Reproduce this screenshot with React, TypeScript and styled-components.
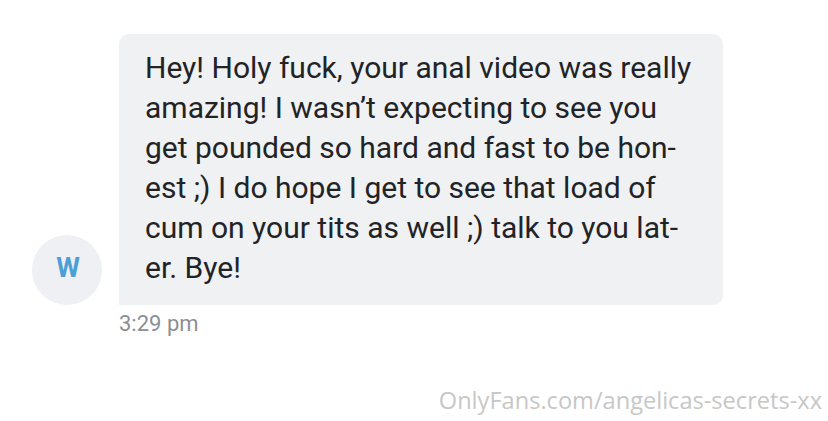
import React from "react";
import styled, { createGlobalStyle } from "styled-components";

const GlobalStyle = createGlobalStyle`
  html, body {
    margin: 0;
    padding: 0;
    background: #ffffff;
  }
  * {
    box-sizing: border-box;
  }
`;

const Page = styled.div`
  width: 828px;
  height: 421px;
  display: flex;
  flex-direction: column;
  padding: 34px 6px 0 32px;
  overflow: hidden;
`;

const MessageRow = styled.div`
  display: flex;
  align-items: flex-end;
  gap: 17px;
`;

const Avatar = styled.div`
  width: 70px;
  height: 70px;
  border-radius: 50%;
  background: #eef0f3;
  display: flex;
  align-items: center;
  justify-content: center;
  flex-shrink: 0;
  padding: 0 0 4px 2px;
  color: #4b9fd6;
  font-family: Roboto, "Liberation Sans", sans-serif;
  font-weight: 700;
  font-size: 27px;
`;

const Bubble = styled.div`
  width: 604px;
  background: #f0f1f3;
  border-radius: 10px 10px 10px 0;
  padding: 14px 20px 17px 26px;
  font-family: Roboto, "Liberation Sans", sans-serif;
  font-size: 30px;
  line-height: 40px;
  color: #222326;
`;

const Line = styled.div`
  white-space: nowrap;
`;

const Time = styled.div`
  margin: 6px 0 0 87px;
  font-family: Roboto, "Liberation Sans", sans-serif;
  font-size: 22px;
  line-height: 26px;
  color: #8b8e93;
`;

const Watermark = styled.div`
  margin-top: auto;
  margin-bottom: 5px;
  align-self: flex-end;
  font-family: "Open Sans", "Liberation Sans", sans-serif;
  font-size: 23.6px;
  line-height: 32px;
  color: #c7c7c7;
`;

const lines = [
  "Hey! Holy fuck, your anal video was really",
  "amazing! I wasn\u2019t expecting to see you",
  "get pounded so hard and fast to be hon-",
  "est ;) I do hope I get to see that load of",
  "cum on your tits as well ;) talk to you lat-",
  "er. Bye!",
];

export default function App() {
  return (
    <>
      <GlobalStyle />
      <Page>
        <MessageRow>
          <Avatar>W</Avatar>
          <Bubble>
            {lines.map((l, i) => (
              <Line key={i}>{l}</Line>
            ))}
          </Bubble>
        </MessageRow>
        <Time>3:29 pm</Time>
        <Watermark>OnlyFans.com/angelicas-secrets-xx</Watermark>
      </Page>
    </>
  );
}
